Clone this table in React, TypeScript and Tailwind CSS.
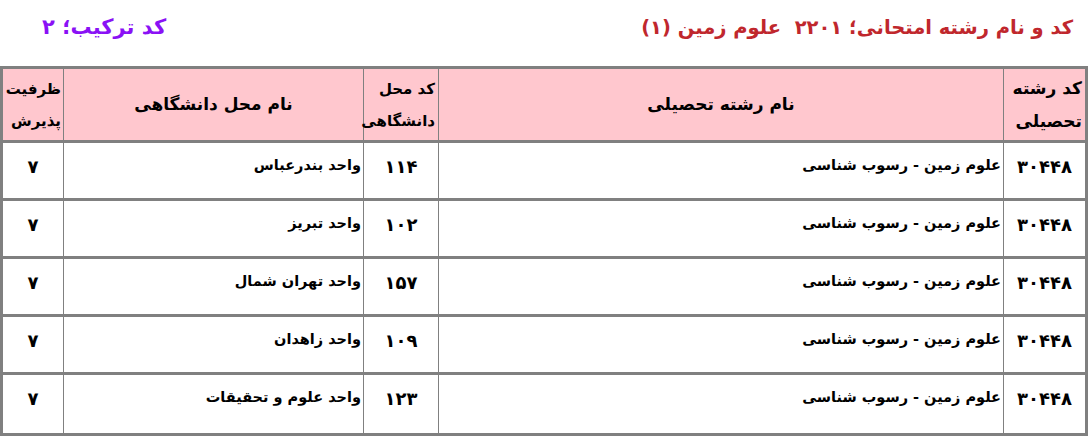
import React from "react";

const rows = [
  { code: "۳۰۴۴۸", name: "علوم زمین - رسوب شناسی", uc: "۱۱۴", un: "واحد بندرعباس", cap: "۷" },
  { code: "۳۰۴۴۸", name: "علوم زمین - رسوب شناسی", uc: "۱۰۲", un: "واحد تبریز", cap: "۷" },
  { code: "۳۰۴۴۸", name: "علوم زمین - رسوب شناسی", uc: "۱۵۷", un: "واحد تهران شمال", cap: "۷" },
  { code: "۳۰۴۴۸", name: "علوم زمین - رسوب شناسی", uc: "۱۰۹", un: "واحد زاهدان", cap: "۷" },
  { code: "۳۰۴۴۸", name: "علوم زمین - رسوب شناسی", uc: "۱۲۳", un: "واحد علوم و تحقیقات", cap: "۷" },
];

const grid = "grid grid-cols-[82px_565px_75px_300px_60px]";

export default function App() {
  return (
    <div dir="rtl" className="w-[1088px] h-[437px] bg-white overflow-hidden font-['DejaVu_Sans',sans-serif] text-black">
      <div className="flex items-center justify-between h-[66px] pr-[15px] pl-[42px] pb-[10px]">
        <div className="text-[19.5px] font-bold text-[#c0272d] whitespace-pre">کد و نام رشته امتحانی؛ ۲۲۰۱  علوم زمین (۱)</div>
        <div className="text-[21px] font-bold text-[#8a11f5]">کد ترکیب؛ ۲</div>
      </div>
      <div className="border-[3px] border-[#808080] w-[1088px]">
        <div className={`${grid} h-[74px] bg-[#ffc7ce] border-b-[3px] border-[#808080] font-bold`}>
          <div className="border-l border-[#808080] flex items-center px-[3px] text-[17px] leading-[33px]">کد رشته تحصیلی</div>
          <div className="border-l border-[#808080] flex items-center justify-center text-[17px]">نام رشته تحصیلی</div>
          <div className="border-l border-[#808080] flex items-center px-[3px] text-[15px] leading-[32px]">کد محل دانشگاهی</div>
          <div className="border-l border-[#808080] flex items-center justify-center text-[17px]">نام محل دانشگاهی</div>
          <div className="flex items-center px-[2px] text-[15px] leading-[32px]">ظرفیت پذیرش</div>
        </div>
        {rows.map((r, i) => (
          <div
            key={i}
            className={`${grid} h-[58px] font-bold ${i < rows.length - 1 ? "border-b-[3px] border-[#808080]" : ""}`}
          >
            <div className="border-l border-[#808080] text-center pt-[10px] text-[18px]">{r.code}</div>
            <div className="border-l border-[#808080] pr-[2px] pt-[12px] text-[14.5px]">{r.name}</div>
            <div className="border-l border-[#808080] text-center pt-[10px] text-[18px]">{r.uc}</div>
            <div className="border-l border-[#808080] pr-[2px] pt-[12px] text-[14.5px]">{r.un}</div>
            <div className="text-center pt-[10px] text-[18px]">{r.cap}</div>
          </div>
        ))}
      </div>
    </div>
  );
}
